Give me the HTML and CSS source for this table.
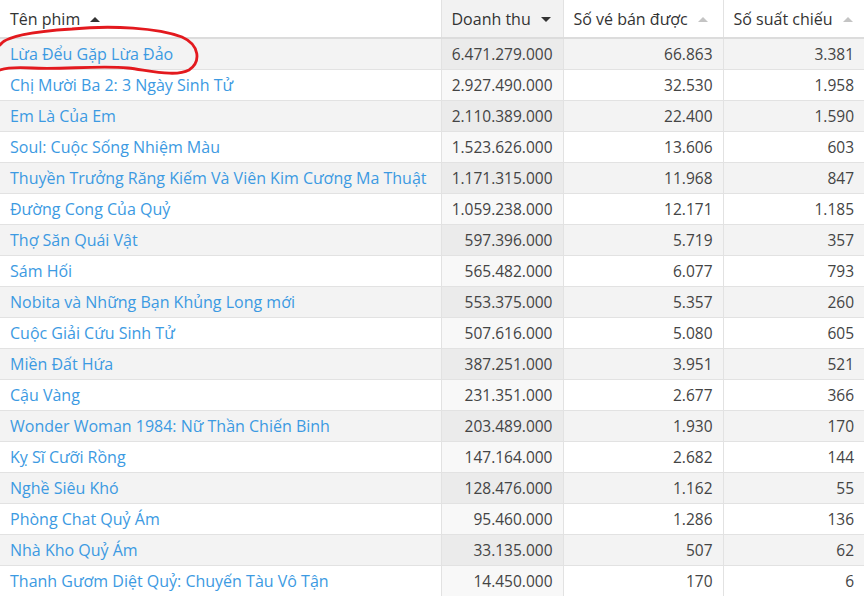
FILE: index.html
```html
<!DOCTYPE html>
<html>
  <head>
    <title>Doanh thu phim</title>
    <meta charset="UTF-8" />
    <link rel="stylesheet" href="styles.css">
  </head>
  <body>
    <div class="wrapper">
      <table class="grid">
        <colgroup>
          <col class="c-name">
          <col class="c-rev">
          <col class="c-tix">
          <col class="c-show">
        </colgroup>
        <thead>
          <tr>
            <th class="left">Tên phim <span class="arrow up on"></span></th>
            <th class="sorted">Doanh thu <span class="arrow down on"></span></th>
            <th>Số vé bán được <span class="arrow up"></span></th>
            <th>Số suất chiếu <span class="arrow up"></span></th>
          </tr>
        </thead>
        <tbody>
          <tr><td><a href="#">Lừa Đểu Gặp Lừa Đảo</a></td><td class="num sorted">6.471.279.000</td><td class="num">66.863</td><td class="num">3.381</td></tr>
          <tr><td><a href="#">Chị Mười Ba 2: 3 Ngày Sinh Tử</a></td><td class="num sorted">2.927.490.000</td><td class="num">32.530</td><td class="num">1.958</td></tr>
          <tr><td><a href="#">Em Là Của Em</a></td><td class="num sorted">2.110.389.000</td><td class="num">22.400</td><td class="num">1.590</td></tr>
          <tr><td><a href="#">Soul: Cuộc Sống Nhiệm Màu</a></td><td class="num sorted">1.523.626.000</td><td class="num">13.606</td><td class="num">603</td></tr>
          <tr><td><a href="#">Thuyền Trưởng Răng Kiếm Và Viên Kim Cương Ma Thuật</a></td><td class="num sorted">1.171.315.000</td><td class="num">11.968</td><td class="num">847</td></tr>
          <tr><td><a href="#">Đường Cong Của Quỷ</a></td><td class="num sorted">1.059.238.000</td><td class="num">12.171</td><td class="num">1.185</td></tr>
          <tr><td><a href="#">Thợ Săn Quái Vật</a></td><td class="num sorted">597.396.000</td><td class="num">5.719</td><td class="num">357</td></tr>
          <tr><td><a href="#">Sám Hối</a></td><td class="num sorted">565.482.000</td><td class="num">6.077</td><td class="num">793</td></tr>
          <tr><td><a href="#">Nobita và Những Bạn Khủng Long mới</a></td><td class="num sorted">553.375.000</td><td class="num">5.357</td><td class="num">260</td></tr>
          <tr><td><a href="#">Cuộc Giải Cứu Sinh Tử</a></td><td class="num sorted">507.616.000</td><td class="num">5.080</td><td class="num">605</td></tr>
          <tr><td><a href="#">Miền Đất Hứa</a></td><td class="num sorted">387.251.000</td><td class="num">3.951</td><td class="num">521</td></tr>
          <tr><td><a href="#">Cậu Vàng</a></td><td class="num sorted">231.351.000</td><td class="num">2.677</td><td class="num">366</td></tr>
          <tr><td><a href="#">Wonder Woman 1984: Nữ Thần Chiến Binh</a></td><td class="num sorted">203.489.000</td><td class="num">1.930</td><td class="num">170</td></tr>
          <tr><td><a href="#">Kỵ Sĩ Cưỡi Rồng</a></td><td class="num sorted">147.164.000</td><td class="num">2.682</td><td class="num">144</td></tr>
          <tr><td><a href="#">Nghề Siêu Khó</a></td><td class="num sorted">128.476.000</td><td class="num">1.162</td><td class="num">55</td></tr>
          <tr><td><a href="#">Phòng Chat Quỷ Ám</a></td><td class="num sorted">95.460.000</td><td class="num">1.286</td><td class="num">136</td></tr>
          <tr><td><a href="#">Nhà Kho Quỷ Ám</a></td><td class="num sorted">33.135.000</td><td class="num">507</td><td class="num">62</td></tr>
          <tr><td><a href="#">Thanh Gươm Diệt Quỷ: Chuyến Tàu Vô Tận</a></td><td class="num sorted">14.450.000</td><td class="num">170</td><td class="num">6</td></tr>
        </tbody>
      </table>

      <!-- hand drawn mark around the top film -->
      <svg class="mark" width="210" height="60" viewBox="0 20 210 60">
        <path d="M0,45 C6,35 40,31 72,29 C112,25 158,28 182,37 C200,45 201,62 189,70 C176,77 152,71 128,68 C98,65 60,70 32,68 C16,67 6,68 0,70"
          fill="none" stroke="#e3191e" stroke-width="2.8" stroke-linecap="round" />
      </svg>
    </div>
  </body>
</html>
```

FILE: styles.css
```css
body {
  margin: 0;
  background: #fff;
  font-family: "Open Sans", "Noto Sans", sans-serif;
  color: #333;
}
.wrapper {
  position: relative;
  width: 864px;
  overflow: hidden;
}
.grid {
  width: 864px;
  border-collapse: collapse;
  table-layout: fixed;
}
.c-name {
  width: 441px;
}
.c-rev {
  width: 122px;
}
.c-tix {
  width: 160px;
}
.c-show {
  width: 141px;
}
th {
  height: 37px;
  padding: 0 10px;
  font-size: 16px;
  font-weight: 500;
  color: #333;
  text-align: left;
  white-space: nowrap;
  border-left: 1px solid #e2e2e2;
  border-bottom: 2px solid #dcdcdc;
}
th:first-child {
  border-left: 0;
}
th.sorted {
  background: #f2f2f2;
}
.arrow {
  display: inline-block;
  width: 0;
  height: 0;
  margin-left: 6px;
  vertical-align: 3px;
  border-left: 5px solid transparent;
  border-right: 5px solid transparent;
}
.arrow.up {
  border-bottom: 5px solid #c4c4c4;
}
.arrow.down {
  border-top: 5px solid #c4c4c4;
}
.arrow.up.on {
  border-bottom-color: #333;
}
.arrow.down.on {
  border-top-color: #333;
}
td {
  height: 30px;
  padding: 0 10px;
  font-size: 16px;
  white-space: nowrap;
  overflow: hidden;
  border-left: 1px solid #e2e2e2;
  border-bottom: 1px solid #e2e2e2;
}
td:first-child {
  border-left: 0;
}
tbody tr:nth-child(odd) {
  background: #f3f3f3;
}
tbody tr:nth-child(odd) td.sorted {
  background: #ebebeb;
}
tbody tr:nth-child(even) td.sorted {
  background: #f8f8f8;
}
td a {
  color: #3c9ae2;
  text-decoration: none;
}
.num {
  text-align: right;
  font-size: 15.5px;
  color: #444;
}
.mark {
  position: absolute;
  left: 0;
  top: 20px;
}
```
